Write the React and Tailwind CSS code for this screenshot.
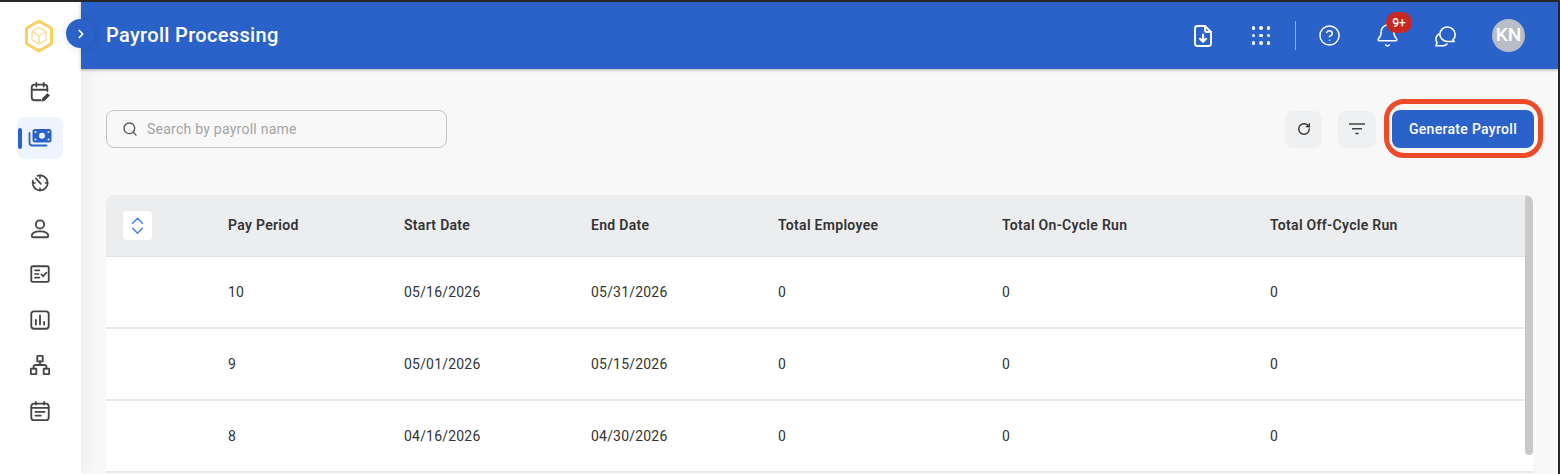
import React from "react";
import { ChevronRight, ChevronUp, ChevronDown, Search, RotateCw, CircleHelp, Bell } from "lucide-react";

const rows = [
  { period: "10", start: "05/16/2026", end: "05/31/2026" },
  { period: "9", start: "05/01/2026", end: "05/15/2026" },
  { period: "8", start: "04/16/2026", end: "04/30/2026" },
];

const cols = "grid grid-cols-[122px_176px_187px_187px_224px_268px_1fr] items-center";

const Logo = () => (
  <svg width="30" height="34" viewBox="0 0 30 34" fill="none">
    <path d="M15 2 27.5 9.2V24.8L15 32 2.5 24.8V9.2Z" stroke="#fbcf5b" strokeWidth="3" strokeLinejoin="round" />
    <path d="M15 8.5 22 12.5V21L15 25 8 21V12.5ZM8 12.5 15 16.7 22 12.5M15 16.7V25" stroke="#fbdc8a" strokeWidth="1.3" strokeLinejoin="round" />
  </svg>
);

const Stroke = ({ children, size = 22, vb = 24 }) => (
  <svg width={size} height={size} viewBox={`0 0 ${vb} ${vb}`} fill="none" stroke="#444" strokeWidth="2" strokeLinecap="round" strokeLinejoin="round">
    {children}
  </svg>
);

const CalendarEdit = () => (
  <Stroke>
    <path d="M13 21H6a3 3 0 0 1-3-3V7a3 3 0 0 1 3-3h11a3 3 0 0 1 3 3v4" />
    <path d="M3 9.5h17M8 2v4M16 2v4" />
    <path d="m14.5 21.5.6-2.8 5-5 2.2 2.2-5 5Z" fill="#444" strokeWidth="1" />
  </Stroke>
);

const Money = () => (
  <svg width="24" height="20" viewBox="0 0 24 20" fill="none">
    <path d="M1.5 5v9.5a3 3 0 0 0 3 3h14" stroke="#2b62c9" strokeWidth="1.8" strokeLinecap="round" />
    <rect x="4.5" y="1" width="19" height="13.5" rx="2.5" fill="#2b62c9" />
    <circle cx="14" cy="7.7" r="3" fill="#eef4fd" />
    <circle cx="7.5" cy="4" r="1" fill="#eef4fd" />
    <circle cx="20.5" cy="4" r="1" fill="#eef4fd" />
    <circle cx="7.5" cy="11.5" r="1" fill="#eef4fd" />
    <circle cx="20.5" cy="11.5" r="1" fill="#eef4fd" />
  </svg>
);

const Timer = () => (
  <Stroke size={20}>
    <path d="M9 3.4A9 9 0 1 1 3.6 9" />
    <path d="M12 2.9V6M3.2 12h3M12 21v-2.5M21 12h-2.5M7 6.5l6 6.5" />
  </Stroke>
);

const Person = () => (
  <Stroke size={22}>
    <circle cx="12" cy="7" r="4.5" />
    <path d="M4.5 21h15a1.5 1.5 0 0 0 1.5-1.5c0-3-3.500-5-9-5s-9 2-9 5A1.5 1.5 0 0 0 4.5 21Z" />
  </Stroke>
);

const Checklist = () => (
  <Stroke size={22}>
    <rect x="2.5" y="3.5" width="19" height="17" rx="1.5" />
    <path d="M6.5 8h5M6.5 12h4M6.5 16h5" strokeWidth="1.8" />
    <path d="m13.5 12.5 2 2 3.500-4" strokeWidth="1.8" />
  </Stroke>
);

const Chart = () => (
  <Stroke>
    <rect x="2.5" y="2.5" width="19" height="19" rx="3" />
    <path d="M7.5 17v-5M12 17V7M16.5 17v-3" />
  </Stroke>
);

const Org = () => (
  <Stroke size={22}>
    <rect x="9" y="2" width="6" height="6" rx="0.5" />
    <rect x="2" y="16" width="6" height="6" rx="0.5" />
    <rect x="16" y="16" width="6" height="6" rx="0.5" />
    <path d="M12 8v4M5 16v-2a2 2 0 0 1 2-2h10a2 2 0 0 1 2 2v2" />
  </Stroke>
);

const Planner = () => (
  <Stroke>
    <rect x="2.5" y="4" width="19" height="18" rx="3" />
    <path d="M2.5 8.5h19M7.5 2v3M16.5 2v3M7 13h10M7 17h6" />
  </Stroke>
);

const FileDown = () => (
  <svg width="20" height="24" viewBox="0 0 20 24" fill="none" stroke="#fff" strokeWidth="1.9" strokeLinecap="round" strokeLinejoin="round">
    <path d="M12 2H4.5A2.5 2.5 0 0 0 2 4.5v15A2.5 2.5 0 0 0 4.5 22h11a2.5 2.5 0 0 0 2.5-2.5V8Z" />
    <path d="M12 2v4a2 2 0 0 0 2 2h4" />
    <path d="M10 10.5v7M7 14.8l3 3 3-3" strokeWidth="2.2" />
  </svg>
);

const Dots = () => (
  <div className="grid grid-cols-3 gap-x-[4px] gap-y-[4px]">
    {[0, 1, 2, 3, 4, 5, 6, 7, 8].map((i) => (
      <span key={i} className="w-[3.5px] h-[3.5px] rounded-full bg-white" />
    ))}
  </div>
);

const Chat = () => (
  <svg width="24" height="24" viewBox="0 0 24 24" fill="none" stroke="#fff" strokeWidth="1.6" strokeLinecap="round" strokeLinejoin="round">
    <path d="M14.5 3a7.8 7.8 0 0 1 7.7 7.7c0 2.2-.9 4-2.3 5.2l1.3 1.6h-6.7a7.6 7.6 0 0 1-7.7-7.2A7.5 7.5 0 0 1 14.5 3Z" />
    <path d="M6 10C3.8 11.5 2.7 13.5 3 15.8c.1 1 .5 2 1.1 2.7L3 21.8h7.5c1.4 0 2.6-.6 3.5-1.8" />
  </svg>
);

const FilterLines = () => (
  <svg width="16" height="12" viewBox="0 0 16 12" fill="none" stroke="#444" strokeWidth="1.5">
    <path d="M0 1h16M3 5.8h10M6.3 10.5h3.4" />
  </svg>
);

const NavItem = ({ children, active }) => (
  <div className={`relative flex items-center justify-center h-[42px] w-[46px] rounded-lg ${active ? "bg-[#eef4fd]" : ""}`}>
    {active && <span className="absolute left-[1px] top-[11px] h-[21px] w-[4px] rounded bg-[#2b62c9]" />}
    {children}
  </div>
);

export default function App() {
  return (
    <div className="relative flex flex-col w-[1560px] h-[474px] overflow-hidden bg-[#2a2a2a] pt-[2px] pr-[2px] font-['Roboto',sans-serif] text-[#2e2e2e]">
      <div className="flex flex-1 min-h-0 bg-[#f8f8f8]">
        <aside className="flex flex-col items-center w-[81px] shrink-0 bg-white shadow-[2px_0_20px_rgba(0,0,0,0.06)] z-10">
          <div className="mt-[17px] mb-[18px] mr-[3px] h-[34px]"><Logo /></div>
          <div className="flex flex-col items-center gap-[3.5px] mr-[2px]">
            <NavItem><CalendarEdit /></NavItem>
            <NavItem active><Money /></NavItem>
            <NavItem><Timer /></NavItem>
            <NavItem><Person /></NavItem>
            <NavItem><Checklist /></NavItem>
            <NavItem><Chart /></NavItem>
            <NavItem><Org /></NavItem>
            <NavItem><Planner /></NavItem>
          </div>
        </aside>

        <main className="flex-1 min-w-0 flex flex-col">
          <header className="relative z-20 flex items-center justify-between h-[67px] shrink-0 bg-[#2b62c9] pl-[25px] pr-[33px] shadow-[0_1px_3px_rgba(0,0,0,0.3)]">
            <h1 className="text-[20px] font-medium text-white mb-[2px] tracking-[0.33px]">Payroll Processing</h1>
            <div className="flex items-center">
              <FileDown />
              <div className="ml-[39px]"><Dots /></div>
              <div className="ml-[25px] w-px h-[29px] bg-white/50" />
              <CircleHelp className="ml-[22px]" size={23} color="#fff" strokeWidth={1.5} />
              <div className="relative ml-[34px]">
                <Bell size={25} color="#fff" strokeWidth={1.4} />
                <span className="absolute -top-[11px] left-[11px] flex items-center justify-center w-[26px] h-[21px] rounded-full bg-[#c8281f] text-[12px] font-medium text-white">9+</span>
              </div>
              <div className="ml-[33px]"><Chat /></div>
              <div className="ml-[35px] flex items-center justify-center w-[33px] h-[33px] rounded-full bg-[#b9bec6] text-[19px] font-medium text-white">KN</div>
            </div>
          </header>

          <div className="flex items-center justify-between pl-[25px] pr-[24px] mt-[41px] h-[38px] shrink-0">
            <div className="flex items-center w-[341px] h-[38px] rounded-lg border border-[#c4c4c4] bg-[#f8f8f8] pl-[15px]">
              <Search size={16} color="#555" strokeWidth={2} />
              <span className="ml-[9px] text-[14px] text-[#a3a3a3] tracking-[0.25px]">Search by payroll name</span>
            </div>
            <div className="flex items-center">
              <button className="flex items-center justify-center w-[37px] h-[37px] rounded-lg bg-[#eff0f2]">
                <RotateCw size={14} color="#333" strokeWidth={2.4} />
              </button>
              <button className="ml-[16px] flex items-center justify-center w-[38px] h-[37px] rounded-lg bg-[#eff0f2]">
                <FilterLines />
              </button>
              <div className="relative ml-[16px]">
                <button className="block h-[38px] w-[142px] rounded-lg bg-[#2b62c9] text-[14px] font-medium text-white tracking-[0.3px]">
                  Generate Payroll
                </button>
                <span className="absolute -left-[8px] -right-[9px] -top-[11px] -bottom-[10px] rounded-[20px] border-[5px] border-[#ee4a26]" />
              </div>
            </div>
          </div>

          <div className="relative mt-[47px] ml-[25px] mr-[25px] flex-1 min-h-0 overflow-hidden bg-white rounded-t-lg">
            <div className={`${cols} h-[62px] bg-[#ecedef] border-b border-[#e0e1e4] text-[14px] font-semibold text-[#333] tracking-[0.3px]`}>
              <div className="pl-[17px]">
                <div className="flex flex-col items-center justify-center w-[29px] h-[29px] rounded bg-white text-[#3b7de0]">
                  <ChevronUp size={21} strokeWidth={1.6} className="-mb-[5px]" />
                  <ChevronDown size={21} strokeWidth={1.6} className="-mt-[5px]" />
                </div>
              </div>
              <div className="mb-[1px]">Pay Period</div>
              <div className="mb-[1px]">Start Date</div>
              <div className="mb-[1px]">End Date</div>
              <div className="mb-[1px]">Total Employee</div>
              <div className="mb-[1px]">Total On-Cycle Run</div>
              <div className="mb-[1px]">Total Off-Cycle Run</div>
            </div>
            {rows.map((r) => (
              <div key={r.period} className={`${cols} h-[72px] border-b-2 border-[#e8e8e8] bg-white text-[14px] text-[#333] tracking-[0.2px]`}>
                <div />
                <div>{r.period}</div>
                <div>{r.start}</div>
                <div>{r.end}</div>
                <div>0</div>
                <div>0</div>
                <div>0</div>
              </div>
            ))}
            <div className="absolute right-0 top-0 h-[260px] w-[8px] rounded bg-[#c9c9c9]" />
          </div>
        </main>
      </div>

      <button className="absolute left-[66px] top-[19px] z-30 flex items-center justify-center w-[29px] h-[29px] rounded-full bg-[#2b62c9] shadow-[0_0_10px_rgba(0,0,0,0.12)]">
        <ChevronRight size={14} color="#fff" strokeWidth={3} />
      </button>
    </div>
  );
}
